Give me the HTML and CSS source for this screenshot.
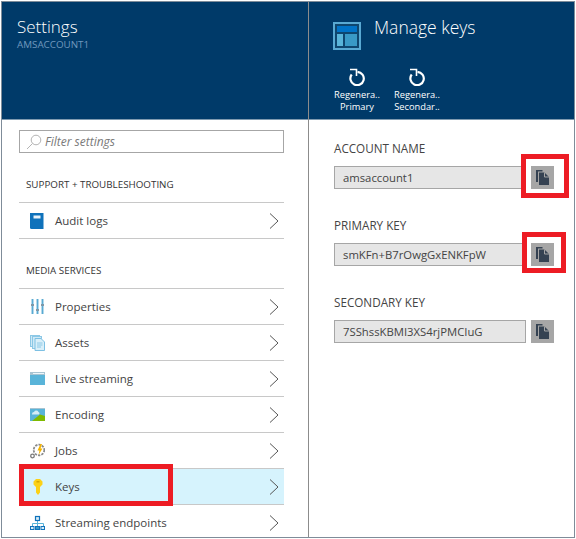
FILE: index.html
```html
<!DOCTYPE html>
<html lang="en">
<head>
<meta charset="utf-8">
<title>Manage keys</title>
<link rel="stylesheet" href="styles.css">
</head>
<body>
<div class="portal">
  <section class="blade blade-settings">
    <header class="blade-head">
      <h1 class="title">Settings</h1>
      <div class="subtitle">AMSACCOUNT1</div>
    </header>
    <div class="blade-body">
      <div class="filter">
        <svg class="filter-icon" width="16" height="16" viewBox="0 0 16 16"><circle cx="10" cy="6" r="4.8" fill="none" stroke="#b4b4b4"/><path d="M6.500 9.500 1 15" stroke="#b4b4b4" fill="none"/></svg>
        <span class="filter-text">Filter settings</span>
      </div>
      <h2 class="section">SUPPORT + TROUBLESHOOTING</h2>
      <ul class="menu">
        <li class="item">
          <svg class="icon" width="16" height="18" viewBox="0 0 16 18"><path d="M1 1h13.500v16H2.500A1.500 1.500 0 0 1 1 15.500z" fill="#0f72bb"/><rect x="4.500" y="3.500" width="7" height="3" fill="#e8f2fa"/></svg>
          <span>Audit logs</span>
          <svg class="chev" width="10" height="16" viewBox="0 0 10 16"><path d="M1 .5 9 8l-8 7.500" fill="none" stroke="#555"/></svg>
        </li>
      </ul>
      <h2 class="section">MEDIA SERVICES</h2>
      <ul class="menu">
        <li class="item">
          <svg class="icon" width="16" height="16" viewBox="0 0 16 16"><g fill="#b3d9ea"><rect x="2" y="0" width="3" height="15"/><rect x="7" y="0" width="3" height="15"/><rect x="12" y="0" width="3" height="15"/></g><g fill="#59a9d3"><rect x="3" y="0" width="1" height="15"/><rect x="8" y="0" width="1" height="15"/><rect x="13" y="0" width="1" height="15"/></g><g fill="#7f98a8"><rect x="2" y="5" width="3" height="2"/><rect x="7" y="10" width="3" height="2"/><rect x="12" y="5" width="3" height="2"/></g></svg>
          <span>Properties</span>
          <svg class="chev" width="10" height="16" viewBox="0 0 10 16"><path d="M1 .5 9 8l-8 7.500" fill="none" stroke="#555"/></svg>
        </li>
        <li class="item">
          <svg class="icon" width="16" height="16" viewBox="0 0 16 16"><rect x="1.500" y=".5" width="9" height="11" fill="#cfe9f6" stroke="#8cc8e6"/><rect x="3.500" y="1.500" width="9" height="12" fill="#cfe9f6" stroke="#8cc8e6"/><path d="M6 3.500h6L15.500 7v8.500H6z" fill="#d9eff9" stroke="#7dc0e3"/><path d="M8 8h5.500M8 10h5.500M8 12h4" stroke="#8cc8e6"/></svg>
          <span>Assets</span>
          <svg class="chev" width="10" height="16" viewBox="0 0 10 16"><path d="M1 .5 9 8l-8 7.500" fill="none" stroke="#555"/></svg>
        </li>
        <li class="item">
          <svg class="icon" width="16" height="16" viewBox="0 0 16 16"><rect x="1" y="1" width="15" height="13" fill="#59b4d9"/><rect x="1" y="1" width="15" height="3" fill="#a9c4d2"/><rect x="4" y="2" width="11" height="1" fill="#eef7fb"/></svg>
          <span>Live streaming</span>
          <svg class="chev" width="10" height="16" viewBox="0 0 10 16"><path d="M1 .5 9 8l-8 7.500" fill="none" stroke="#555"/></svg>
        </li>
        <li class="item">
          <svg class="icon" width="16" height="16" viewBox="0 0 16 16"><rect x="1" y="1" width="15" height="13" fill="#59b4d9"/><rect x="1" y="1" width="15" height="1" fill="#a9c4d2"/><path d="M3 14 11 7.500l5 1.500v5z" fill="#7fba00"/><path d="M3 7a2 2 0 0 1 2-2 2.500 2.500 0 0 1 4.500 0A1.500 1.500 0 0 1 10 7.500H3z" fill="#d5edf7"/></svg>
          <span>Encoding</span>
          <svg class="chev" width="10" height="16" viewBox="0 0 10 16"><path d="M1 .5 9 8l-8 7.500" fill="none" stroke="#555"/></svg>
        </li>
        <li class="item">
          <svg class="icon" width="16" height="16" viewBox="0 0 16 16"><circle cx="10" cy="7" r="5.300" fill="none" stroke="#8a8a8a" stroke-width="1.800" stroke-dasharray="2.300 1.100"/><circle cx="3.500" cy="13" r="1.800" fill="none" stroke="#7a7a7a" stroke-width="1.300"/><path d="M11.500 1 8.500 7.500h2L9.500 12l4-6.500h-2L13 1z" fill="#f5b400"/></svg>
          <span>Jobs</span>
          <svg class="chev" width="10" height="16" viewBox="0 0 10 16"><path d="M1 .5 9 8l-8 7.500" fill="none" stroke="#555"/></svg>
        </li>
        <li class="item item-active">
          <svg class="icon" width="16" height="18" viewBox="0 0 16 18"><path d="M7 9 4.500 6.500V3.500L7 1h4l2.500 2.500v3L11 9v5.500L9 17l-2-2.500z" fill="#fcd116"/><rect x="7.500" y="3" width="3" height="1.500" fill="#d8a800"/></svg>
          <span>Keys</span>
          <svg class="chev" width="10" height="16" viewBox="0 0 10 16"><path d="M1 .5 9 8l-8 7.500" fill="none" stroke="#555"/></svg>
        </li>
        <li class="item">
          <svg class="icon" width="16" height="16" viewBox="0 0 16 16"><path d="M8.500 6v5M3.500 11V8.500h11V11" fill="none" stroke="#59b4d9"/><rect x="6.500" y="1.500" width="4" height="4" fill="#d6ecf7" stroke="#0f72bb" stroke-width="1.200"/><rect x="1.500" y="11.500" width="3.500" height="3" fill="#d6ecf7" stroke="#0f72bb"/><rect x="6.500" y="11.500" width="4" height="3" fill="#3999c6" stroke="#0f72bb"/><rect x="12" y="11.500" width="3.500" height="3" fill="#d6ecf7" stroke="#0f72bb"/></svg>
          <span>Streaming endpoints</span>
          <svg class="chev" width="10" height="16" viewBox="0 0 10 16"><path d="M1 .5 9 8l-8 7.500" fill="none" stroke="#555"/></svg>
        </li>
      </ul>
    </div>
  </section>

  <section class="blade blade-keys">
    <header class="blade-head">
      <div class="keys-title">
        <svg class="keys-icon" width="28" height="28" viewBox="0 0 28 28"><rect width="28" height="28" fill="#59a9d3"/><rect x="2" y="2" width="24" height="24" fill="#0e466f"/><rect x="4" y="4" width="20" height="6" fill="#0072c6"/><rect x="4" y="12" width="6" height="12" fill="#59b4d9"/><rect x="12" y="12" width="12" height="12" fill="#3999c6"/></svg>
        <h1 class="title">Manage keys</h1>
      </div>
      <div class="commands">
        <div class="command">
          <svg width="18" height="18" viewBox="0 0 18 18"><path d="M9.500 3.800A6.700 6.700 0 1 1 3.700 6.500" fill="none" stroke="#fff" stroke-width="2.200"/><path d="M2 1.500h6.500V8" fill="none" stroke="#fff" stroke-width="1.600"/></svg>
          <span>Regenera..</span><span>Primary</span>
        </div>
        <div class="command">
          <svg width="18" height="18" viewBox="0 0 18 18"><path d="M9.500 3.800A6.700 6.700 0 1 1 3.700 6.500" fill="none" stroke="#fff" stroke-width="2.200"/><path d="M2 1.500h6.500V8" fill="none" stroke="#fff" stroke-width="1.600"/></svg>
          <span>Regenera..</span><span>Secondar..</span>
        </div>
      </div>
    </header>
    <div class="blade-body keys-body">
      <div class="field">
        <label class="field-label">ACCOUNT NAME</label>
        <div class="field-row">
          <div class="field-value"><span class="field-text">amsaccount1</span></div>
          <button class="copy" aria-label="Copy"><svg width="13" height="15" viewBox="0 0 13 15"><path d="M0 0h6.500v1.500H2V12H0z" fill="#354252"/><path d="M3 2.500h5.500L13 7v8H3z" fill="#354252"/><path d="M8.500 2.500v4.500H13" fill="none" stroke="#a6a6a6"/></svg></button>
        </div>
      </div>
      <div class="field">
        <label class="field-label">PRIMARY KEY</label>
        <div class="field-row">
          <div class="field-value"><span class="field-text">smKFn+B7rOwgGxENKFpW</span></div>
          <button class="copy" aria-label="Copy"><svg width="13" height="15" viewBox="0 0 13 15"><path d="M0 0h6.500v1.500H2V12H0z" fill="#354252"/><path d="M3 2.500h5.500L13 7v8H3z" fill="#354252"/><path d="M8.500 2.500v4.500H13" fill="none" stroke="#a6a6a6"/></svg></button>
        </div>
      </div>
      <div class="field">
        <label class="field-label">SECONDARY KEY</label>
        <div class="field-row">
          <div class="field-value"><span class="field-text field-text-clip">7SShssKBMI3XS4rjPMCIuG9</span></div>
          <button class="copy" aria-label="Copy"><svg width="13" height="15" viewBox="0 0 13 15"><path d="M0 0h6.500v1.500H2V12H0z" fill="#354252"/><path d="M3 2.500h5.500L13 7v8H3z" fill="#354252"/><path d="M8.500 2.500v4.500H13" fill="none" stroke="#a6a6a6"/></svg></button>
        </div>
      </div>
    </div>
  </section>

  <div class="mark mark-keys"></div>
  <div class="mark mark-copy1"></div>
  <div class="mark mark-copy2"></div>
</div>
</body>
</html>
```

FILE: styles.css
```css
* { box-sizing: border-box; }
html, body { margin: 0; padding: 0; background: #fff; }
body { width: 576px; height: 539px; overflow: hidden; font-family: "Open Sans", "Noto Sans", sans-serif; color: #3c3c3c; }
.portal { position: relative; display: flex; margin: 1px 1px 0 1px; width: 574px; height: 537px; border: 1px solid #7f8c99; overflow: hidden; }
.blade { display: flex; flex-direction: column; }
.blade-settings { width: 307px; border-right: 1px solid #8c8c8c; }
.blade-keys { flex: 1; }
.blade-head { height: 118px; flex: none; background: #003a69; border-bottom: 1px solid #7f9ab0; }
.blade-settings .blade-head { padding: 15px 0 0 15px; }
.blade-keys .blade-head { padding: 15px 0 0 24px; }
.title { margin: 0; font-size: 17px; line-height: 20px; font-weight: 300; color: #fff; }
.blade-keys .title { font-size: 17.500px; }
.subtitle { margin-top: 2px; font-size: 9.800px; line-height: 12px; color: #7098bd; }
.keys-title { display: flex; align-items: flex-start; gap: 13px; }
.keys-icon { margin-top: 5px; }
.commands { display: flex; margin: 18px 0 0 -6px; }
.command { width: 60px; display: flex; flex-direction: column; align-items: center; font-size: 9.300px; line-height: 12px; color: #fff; }
.command svg { margin-bottom: 3px; }
.blade-body { flex: 1; padding: 10px 24px 0 17px; }
.filter { display: flex; align-items: center; height: 23px; border: 1px solid #a6a6a6; padding-left: 6px; gap: 3px; }
.filter-text { font-size: 12px; font-style: italic; color: #7a7a7a; }
.section { margin: 26px 0 0 7px; height: 23px; font-size: 9.800px; line-height: 12px; font-weight: 400; color: #333; }
.menu { list-style: none; margin: 0; padding: 0; border-top: 1px solid #c8c8c8; }
.item { display: flex; align-items: center; height: 36px; border-bottom: 1px solid #c8c8c8; padding-left: 10px; font-size: 11.500px; color: #444; }
.item-active { background: #d6f3fd; }
.icon { flex: none; width: 16px; margin-right: 10px; }
.chev { margin-left: auto; margin-right: 5px; }
.keys-body { padding: 21px 0 0 25px; }
.field { height: 77px; }
.field-label { display: block; font-size: 11.700px; line-height: 14px; height: 25px; color: #444; }
.field-row { display: flex; gap: 5px; }
.field-value { width: 192px; height: 23px; background: #e6e6e6; border: 1px solid #a6a6a6; padding: 0 8px; font-size: 11.300px; line-height: 21px; color: #444; white-space: nowrap; overflow: hidden; }
.field-text { display: block; }
.field-text-clip { width: 140px; overflow: hidden; }
.copy { width: 23px; height: 23px; padding: 0; border: 0; background: #a6a6a6; display: flex; align-items: center; justify-content: center; }
.mark { position: absolute; border: 5px solid #ed1c24; }
.mark-keys { left: 17px; top: 462px; width: 154px; height: 42px; }
.mark-copy1 { left: 519px; top: 152px; width: 48px; height: 44px; }
.mark-copy2 { left: 520px; top: 230px; width: 44px; height: 41px; }
```
